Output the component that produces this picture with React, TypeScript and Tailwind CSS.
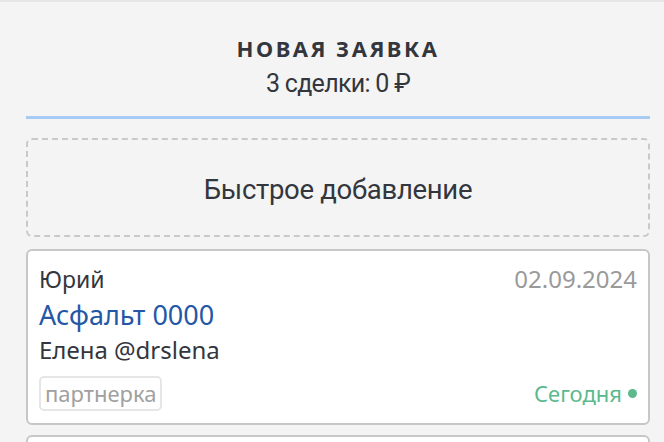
export default function App() {
  return (
    <div className="min-h-screen border-t-2 border-[#e6e6e6] bg-[#f4f4f4] pl-[26px] pr-[14px] font-['Noto_Sans',sans-serif] text-[#33363d]">
      <div className="flex flex-col items-center pt-[32px]">
        <h2 className="text-[22px] font-bold leading-[28px] tracking-[2.5px]">НОВАЯ ЗАЯВКА</h2>
        <p className="mt-[7px] text-[25px] leading-[30px] tracking-[-0.7px] font-['Roboto',sans-serif]">3 сделки: 0 ₽</p>
      </div>
      <div className="mt-[17px] h-[3px] bg-[#a8cbf6]" />
      <div className="mt-[19px] flex h-[99px] items-center justify-center rounded-[6px] border-2 border-dashed border-[#c9c9c9] pt-[4px]">
        <span className="text-[27.5px] font-['Roboto',sans-serif] tracking-[-0.3px]">Быстрое добавление</span>
      </div>
      <div className="mt-[12px] rounded-[6px] border-2 border-[#c7c7c7] bg-white px-[11px] pt-[12px] pb-[12px]">
        <div className="flex items-baseline justify-between">
          <span className="text-[23px] leading-[32px]">Юрий</span>
          <span className="text-[24px] leading-[32px] text-[#9a9a9a]">02.09.2024</span>
        </div>
        <div className="mt-[2px] text-[27px] leading-[36px] text-[#2457a6]">Асфальт 0000</div>
        <div className="mt-[1px] text-[24px] leading-[32px]">Елена @drslena</div>
        <div className="mt-[10px] flex items-center justify-between">
          <span className="rounded-[5px] border-2 border-[#e6e6e6] px-[4px] text-[22px] leading-[31px] text-[#a0a0a0]">партнерка</span>
          <span className="flex items-center gap-[6px] text-[22px] leading-[31px] text-[#5cb98e]">
            Сегодня
            <span className="h-[9px] w-[9px] rounded-full bg-[#5cb98e]" />
          </span>
        </div>
      </div>
      <div className="mt-[10px] h-[40px] rounded-[6px] border-2 border-[#c7c7c7] bg-white" />
    </div>
  );
}
